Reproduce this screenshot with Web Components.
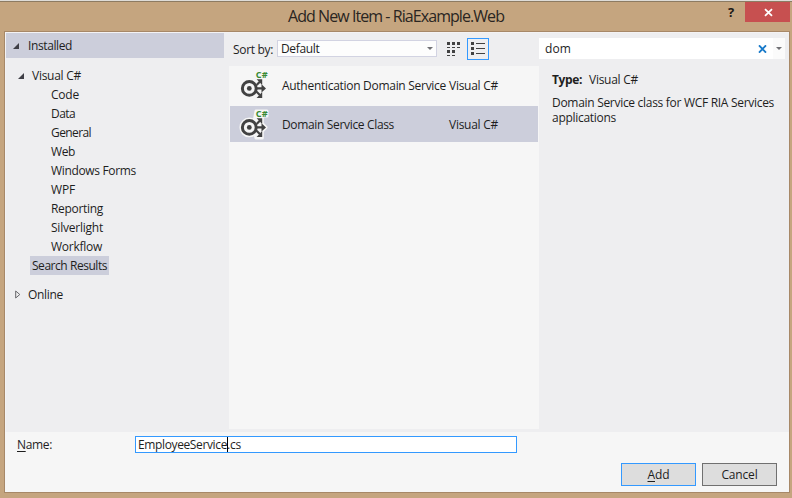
<!DOCTYPE html>
<html lang="en">
<head>
<meta charset="utf-8">
<title>Add New Item - RiaExample.Web</title>
<style>
html,body{margin:0;width:792px;height:498px;overflow:hidden}
body{font:12px/19px "Open Sans","Noto Sans",sans-serif;color:#1e1e1e}
</style>
</head>
<body>
<add-item-dialog></add-item-dialog>
<script>
const define = (name, html, setup) => customElements.define(name, class extends HTMLElement {
  connectedCallback() {
    if (this.shadowRoot) return;
    const t = document.createElement('template');
    t.innerHTML = html;
    this.attachShadow({mode: 'open'}).appendChild(t.content.cloneNode(true));
    if (setup) setup.call(this, this.shadowRoot);
  }
});

/* A single-line label whose tracking is adjusted to the width in its "w" attribute. */
define('ui-text', `<style>:host{display:inline-block;white-space:nowrap;flex:none}span{display:inline-block}</style><span><slot></slot></span>`,
function (root) {
  const span = root.querySelector('span'), w = +this.getAttribute('w');
  if (!w) return;
  this.style.width = w + 'px';
  span.style.letterSpacing = (w - span.getBoundingClientRect().width) / this.textContent.length + 'px';
});

define('title-bar', `<style>
:host{display:grid;grid-template-columns:1fr auto 45px;height:29px;padding:0 2px 0 0}
.t{font-size:16px;line-height:28px;padding-left:288px;color:#2a2522}
.h{font:bold 13px/20px "Open Sans",sans-serif;width:17px;color:#1c1917}
.c{background:#c75050;height:20px;display:grid;place-items:center}
svg{display:block;margin:1px 0 0 1px}
</style><div class="t"><slot></slot></div><div class="h">?</div>
<div class="c"><svg width="9" height="9" viewBox="0 0 9 9"><path d="M1 1.2L8 7.8M8 1.2L1 7.8" stroke="#fff" stroke-width="1.8"/></svg></div>`);

define('tree-row', `<style>
:host{display:flex;height:19px;line-height:19px;align-items:center;box-sizing:border-box;padding-left:45px}
:host([level="0"]){padding-left:9px}
:host([level="1"]){padding-left:12px}
:host([head]){height:25px;line-height:25px;background:#cccedb;padding-left:7px}
:host([selected]){padding-left:24px}
:host([selected]) .s{background:#cccedb;padding:0 2px;height:19px}
svg{display:none;flex:none}
:host([open]) .o,:host([closed]) .c{display:block}
.o{width:6px;height:6px;margin-right:8px}
:host([head]) .o{margin-right:9px}
.c{width:6px;height:9px;margin-right:7px}
</style><svg class="o" viewBox="0 0 6 6"><path d="M0 6L6 0V6Z" fill="#3f3f46"/></svg>
<svg class="c" viewBox="0 0 6 9"><path d="M.7 1V8L4.8 4.5Z" fill="#eee" stroke="#66666b"/></svg>
<div class="s"><slot></slot></div>`);

define('category-tree', `<style>
:host{display:flex;flex-direction:column;width:218px;padding:1px 0 0 1px}
.g{height:8px}.h{height:10px}
</style>
<tree-row head open><ui-text w="44">Installed</ui-text></tree-row>
<div class="g"></div>
<tree-row level="1" open><ui-text w="49">Visual C#</ui-text></tree-row>
<tree-row><ui-text w="28">Code</ui-text></tree-row>
<tree-row><ui-text w="24">Data</ui-text></tree-row>
<tree-row><ui-text w="40">General</ui-text></tree-row>
<tree-row><ui-text w="24">Web</ui-text></tree-row>
<tree-row><ui-text w="85">Windows Forms</ui-text></tree-row>
<tree-row><ui-text w="24">WPF</ui-text></tree-row>
<tree-row><ui-text w="52">Reporting</ui-text></tree-row>
<tree-row><ui-text w="52">Silverlight</ui-text></tree-row>
<tree-row><ui-text w="51">Workflow</ui-text></tree-row>
<tree-row selected><ui-text w="75">Search Results</ui-text></tree-row>
<div class="h"></div>
<tree-row level="0" closed><ui-text w="35">Online</ui-text></tree-row>`);

define('combo-box', `<style>
:host{display:flex;align-items:center;justify-content:space-between;box-sizing:border-box;width:160px;height:17px;border:1px solid #d2d3e2;background:#fdfdfd;padding:0 3px;line-height:15px}
svg{display:block}
</style><slot></slot><svg width="6" height="3" viewBox="0 0 6 3"><path d="M0 0H6L3 3Z" fill="#717175"/></svg>`);

define('view-toggle', `<style>
:host{display:flex;gap:7px;align-items:flex-start}
svg{display:block}.b{box-sizing:border-box;width:22px;height:22px;border:1px solid #3399ff;padding:3px}
</style>
<svg style="margin-top:4px" width="14" height="15" viewBox="0 0 14 15" shape-rendering="crispEdges" fill="#424242"><path d="M1 0h3v3H1zM6 0h3v3H6zM11 0h3v3h-3zM1 5h3v1H1zM6 5h3v1H6zM11 5h3v1h-3zM1 8h3v3H1zM6 8h3v3H6zM1 13h3v1H1zM6 13h3v1H6z"/></svg>
<div class="b"><svg width="15" height="14" viewBox="0 0 15 14" shape-rendering="crispEdges" fill="#424242"><path d="M0 0h3v3H0zM5 1h9v1H5zM0 5h3v3H0zM5 6h9v1H5zM0 10h3v3H0zM5 11h9v1H5z"/></svg></div>`);

define('service-icon', `<style>:host{display:block;width:32px;height:32px}svg{display:block;overflow:visible}
.halo{display:none}:host([lit]) .halo{display:block}
text{font:bold 9px "Open Sans",sans-serif}</style>
<svg width="32" height="32" viewBox="0 0 32 32">
<g class="halo" fill="#f6f6f6" stroke="#f6f6f6" stroke-width="3" stroke-linejoin="round"><circle cx="11.3" cy="19.4" r="8.4"/><path d="M18 3H29V8H24.3V15.5L28 19.4L24.3 23.3V30H18L15 19Z"/></g>
<g fill="none" stroke="#424242">
<circle cx="11.3" cy="19.4" r="6.9" stroke-width="3"/>
<path d="M18 19.4H25M18.6 16L21.8 12.8M18.6 22.8L21.8 26" stroke-width="2.2"/></g>
<g fill="#424242"><circle cx="11.3" cy="19.4" r="2.4"/><path d="M23.5 15.2L28 19.4L23.5 23.6ZM18.6 10.3H24.2V15.9ZM24.2 23V28.9H18.6Z"/></g>
<text x="17.8" y="8.6" fill="#388a34" textLength="11.8" lengthAdjust="spacingAndGlyphs">C#</text>
</svg>`);

define('template-row', `<style>
:host{display:grid;grid-template-columns:44px 167px auto;align-items:center;height:36px;padding-left:8px;margin-bottom:3px}
:host([selected]){background:#cccedb}
</style><service-icon></service-icon><slot name="name"></slot><slot name="kind"></slot>`,
function (root) { if (this.hasAttribute('selected')) root.querySelector('service-icon').setAttribute('lit', ''); });

define('template-list', `<style>
:host{display:block;width:310px;margin-left:5px}
.bar{display:flex;height:34px;box-sizing:border-box;padding:6px 0 0 4px;align-items:flex-start}
.bar>ui-text{margin-top:2px}combo-box{margin:2px 0 0 4px}view-toggle{margin-left:9px}
.list{box-sizing:border-box;height:363px;background:#f6f6f6;padding:1px}
</style><div class="bar"><ui-text w="40">Sort by:</ui-text><combo-box><ui-text w="38.5">Default</ui-text></combo-box><view-toggle></view-toggle></div>
<div class="list">
<template-row><ui-text slot="name" w="164">Authentication Domain Service</ui-text><ui-text slot="kind" w="49">Visual C#</ui-text></template-row>
<template-row selected><ui-text slot="name" w="112">Domain Service Class</ui-text><ui-text slot="kind" w="49">Visual C#</ui-text></template-row>
</div>`);

define('search-box', `<style>
:host{display:flex;align-items:center;height:21px;background:#fff;padding-left:6px;line-height:21px}
.x{margin-left:auto;margin-right:6px}.d{width:12px;height:21px;background:#fbfbfb;display:grid;place-items:center}
svg{display:block}
</style><slot></slot><svg class="x" width="9" height="8" viewBox="0 0 9 8"><path d="M1 .3L8 7.7M8 .3L1 7.7" stroke="#1779c9" stroke-width="1.8"/></svg>
<div class="d"><svg width="6" height="3" viewBox="0 0 6 3"><path d="M0 0H6L3 3Z" fill="#717175"/></svg></div>`);

define('detail-pane', `<style>
:host{display:block;width:246px;padding-top:6px}
.type{display:flex;gap:7px;margin:11px 0 0 13px;height:19px}
.desc{display:grid;line-height:15px;margin:6px 0 0 13px}
b{font-weight:700}
</style><search-box><ui-text w="26">dom</ui-text></search-box>
<div class="type"><b><ui-text w="30">Type:</ui-text></b><ui-text w="49">Visual C#</ui-text></div>
<div class="desc"><ui-text w="222">Domain Service class for WCF RIA Services</ui-text><ui-text w="64">applications</ui-text></div>`);

define('push-button', `<style>
:host{display:flex;box-sizing:border-box;width:75px;height:23px;border:1px solid var(--edge,#707070);background:#dddddd;align-items:center;justify-content:center;line-height:21px}
</style><slot></slot>`);

define('name-field', `<style>
:host{display:flex;align-items:center;box-sizing:border-box;width:382px;height:17px;border:1px solid #3399ff;background:#fff;padding-left:2px;line-height:15px}
i{width:1px;height:15px;background:#000;margin-right:-1px;z-index:1}
</style><ui-text w="89">EmployeeService</ui-text><i></i><ui-text w="14">.cs</ui-text>`);

define('dialog-footer', `<style>
:host{display:block;height:60px;background:#f6f6f6}
.n{display:flex;padding:4px 0 0 12px;height:17px;line-height:17px;align-items:center}
name-field{margin-left:83px}
.b{display:flex;gap:6px;justify-content:flex-end;padding:10px 12px 0 0}
.add{--edge:#3399ff}
u{text-underline-offset:2px}
</style><div class="n"><ui-text w="35"><u>N</u>ame:</ui-text><name-field></name-field></div>
<div class="b"><push-button class="add"><ui-text w="22"><u>A</u>dd</ui-text></push-button><push-button><ui-text w="36">Cancel</ui-text></push-button></div>`);

define('add-item-dialog', `<style>
:host{display:block;box-sizing:border-box;width:792px;height:498px;background:#c5a57f;border-top:1px solid #dedcd8}
.edge{height:1px;background:#8d7b62}
.client{margin-left:4px;width:784px;border:1px solid #a78868;height:460px;background:#eeeef0}
.main{display:flex;height:400px;box-shadow:inset 1px 1px #f4f3f4}
</style><div class="edge"></div>
<title-bar><ui-text w="216">Add New Item - RiaExample.Web</ui-text></title-bar>
<div class="client"><div class="main"><category-tree></category-tree><template-list></template-list><detail-pane></detail-pane></div>
<dialog-footer></dialog-footer></div>`);
</script>
</body>
</html>
